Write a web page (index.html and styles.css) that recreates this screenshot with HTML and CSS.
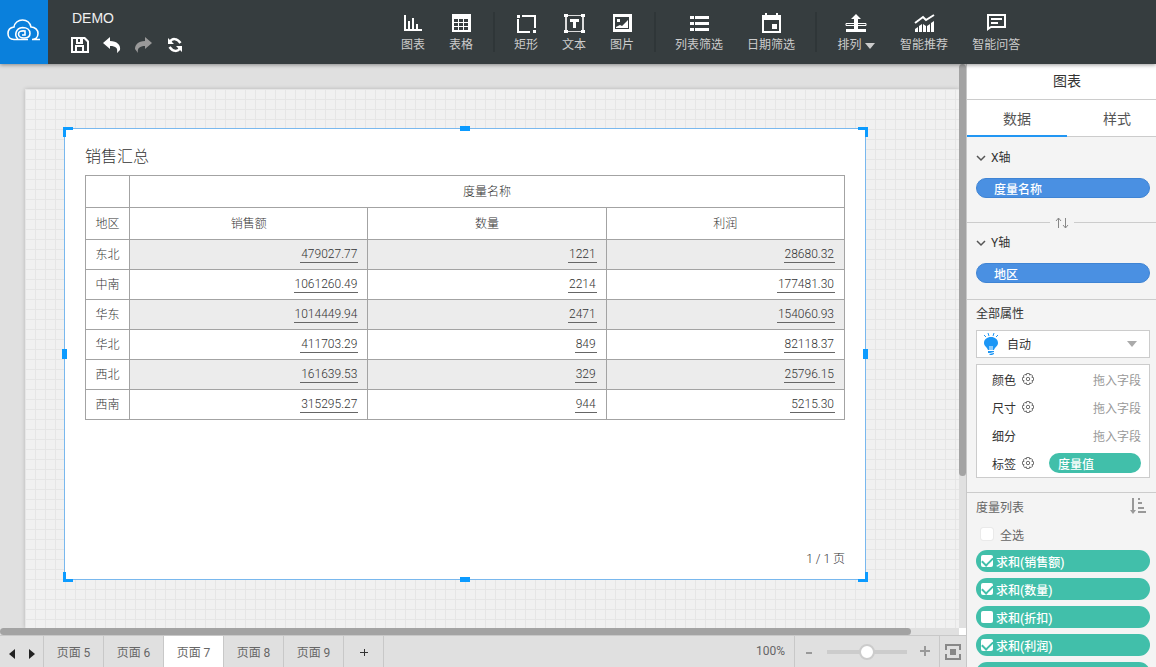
FILE: index.html
```
<!DOCTYPE html>
<html lang="zh-CN">
<head>
    <meta charset="UTF-8">
    <meta name="viewport" content="width=device-width, initial-scale=1.0">
    <title>DEMO</title>
    <link rel="stylesheet" href="styles.css">
</head>
<body>

    <!-- 顶部工具栏 -->
    <header class="header">
        <a class="logo" href="#" aria-label="首页">
            <svg width="34" height="22" viewBox="0 0 34 22" fill="none" stroke="#fff" stroke-width="1.600">
                <path d="M21 20.500H7C3 20.500 1 17.500 1 14.500C1 11 3.500 8.500 7 8C7.500 4 11 1 15.500 1C20 1 23 4 24 8C28 8 31 11 31 14.500C31 18 28.500 20.500 25 20.500H33"/>
                <path d="M11 20C7 17 8.500 9 15.500 8.500C20 8.500 23 11 23 14.500C23 18 20 19 17 19C14 19 11.500 17.500 11.500 15C11.500 12.500 14 11.500 18 12V16H15"/>
            </svg>
        </a>
        <div class="project">
            <div class="project-name">DEMO</div>
            <div class="project-actions">
                <button aria-label="保存">
                    <svg width="18" height="16" viewBox="0 0 18 16"><path fill="#fff" fill-rule="evenodd" d="M0 0H14L18 4V16H0ZM2 2V14H4V8H13V14H16V5L13 2H12V7H5V2ZM7 2V5H9V2ZM6 10V14H11V10Z"/></svg>
                </button>
                <button aria-label="撤销">
                    <svg width="18" height="16" viewBox="0 0 18 16"><path fill="#fff" d="M0 6L7 0V4C14 4 18 8 17 13L14 16C15 11 13 9 7 9V12Z"/></svg>
                </button>
                <button aria-label="重做">
                    <svg width="18" height="16" viewBox="0 0 18 16"><path fill="#999" d="M17 6L10 0V4C3 4 0 8 0 12L3 16C2 11 5 9 10 9V12Z"/></svg>
                </button>
                <button aria-label="刷新">
                    <svg width="16" height="16" viewBox="0 0 16 16"><path fill="none" stroke="#fff" stroke-width="2.500" d="M3 5C5 1 10 1 13.500 6M13 11C11 15 6 15 2.500 10"/><path fill="#fff" d="M1 1V7H7ZM15 15V9H9Z"/></svg>
                </button>
            </div>
        </div>
        <nav class="toolbar">
            <button class="tool">
                <svg width="20" height="20" viewBox="0 0 20 20" fill="#fff"><path d="M1 1H3V15H19V17H1ZM5 7H7V15H5ZM9 4H11V15H9ZM13 10H15V15H13Z"/></svg>
                <span>图表</span>
            </button>
            <button class="tool">
                <svg width="20" height="20" viewBox="0 0 20 20"><path fill="#fff" fill-rule="evenodd" d="M1 0H20V18H1ZM3 5V8H7V5ZM8 5V8H12V5ZM13 5V8H17V5ZM3 9V12H7V9ZM8 9V12H12V9ZM13 9V12H17V9ZM3 13V16H7V13ZM8 13V16H12V13ZM13 13V16H17V13Z"/></svg>
                <span>表格</span>
            </button>
            <i class="divider"></i>
            <button class="tool">
                <svg width="20" height="20" viewBox="0 0 20 20"><path fill="none" stroke="#fff" stroke-width="2" d="M6 2H19V14M14 18H2V5"/><path fill="#fff" d="M1 1H4V4H1ZM17 16H20V19H17Z"/></svg>
                <span>矩形</span>
            </button>
            <button class="tool">
                <svg width="20" height="20" viewBox="0 0 20 20"><path fill="none" stroke="#ddd" stroke-width="1" d="M2 1.500H19M2 17.500H19"/><path fill="none" stroke="#ddd" stroke-width="2" d="M2 1V17M19 1V17"/><path fill="#fff" d="M0 0H4V3H0ZM17 0H21V3H17ZM0 16H4V19H0ZM17 16H21V19H17ZM6 5H15V8H12V14H9V8H6Z"/></svg>
                <span>文本</span>
            </button>
            <button class="tool">
                <svg width="20" height="20" viewBox="0 0 20 20"><path fill="#fff" fill-rule="evenodd" d="M1 0H20V18H1ZM3 3V15H17V3ZM5 5H8V8H5ZM4 13L8 11L10 12L16 6V14H4Z"/></svg>
                <span>图片</span>
            </button>
            <i class="divider"></i>
            <button class="tool">
                <svg width="20" height="20" viewBox="0 0 20 20" fill="#fff"><path d="M1 2H5V5H1ZM6 2H20V5H6ZM1 8H5V11H1ZM6 8H20V11H6ZM1 14H5V17H1ZM6 14H20V17H6Z"/></svg>
                <span>列表筛选</span>
            </button>
            <button class="tool">
                <svg width="20" height="20" viewBox="0 0 20 20"><path fill="#fff" fill-rule="evenodd" d="M4 -1H6V1H15V-1H17V1H20V19H1V1H4ZM3 6V17H18V6ZM11 10H16V15H11Z"/></svg>
                <span>日期筛选</span>
            </button>
            <i class="divider"></i>
            <button class="tool tool-arrange">
                <svg width="22" height="20" viewBox="0 0 22 20"><path fill="none" stroke="#fff" d="M1 9.500H21V11.500H1Z"/><path fill="#fff" d="M11 0L16 5H13V15H21V18H1V15H9V5H6Z"/></svg>
                <span>排列 <i class="caret"></i></span>
            </button>
            <button class="tool">
                <svg width="20" height="20" viewBox="0 0 20 20"><path fill="none" stroke="#fff" stroke-width="2" d="M1 9L9 3L12 6L20 1"/><path fill="#fff" d="M1 15L4 13V18H1ZM5 12L8 10V18H5ZM9 10L12 12V18H9ZM13 12L16 10V18H13ZM17 9L20 7V18H17Z"/></svg>
                <span>智能推荐</span>
            </button>
            <button class="tool">
                <svg width="20" height="20" viewBox="0 0 20 20"><path fill="#fff" fill-rule="evenodd" d="M1 0H20V14H5L1 17ZM3 2V13L5 12H18V2ZM5 4H16V6H5ZM5 8H12V10H5Z"/></svg>
                <span>智能问答</span>
            </button>
        </nav>
    </header>

    <main class="main">
        <section class="editor">
            <!-- 画布 -->
            <div class="workspace">
                <div class="viewport">
                    <div class="sheet">
                        <div class="widget">
                            <h1 class="widget-title">销售汇总</h1>
                            <table class="report">
                                <colgroup><col class="col-area"><col><col><col></colgroup>
                                <thead>
                                    <tr><th></th><th colspan="3">度量名称</th></tr>
                                    <tr><th>地区</th><th>销售额</th><th>数量</th><th>利润</th></tr>
                                </thead>
                                <tbody>
                                    <tr><th>东北</th><td><span>479027.77</span></td><td><span>1221</span></td><td><span>28680.32</span></td></tr>
                                    <tr><th>中南</th><td><span>1061260.49</span></td><td><span>2214</span></td><td><span>177481.30</span></td></tr>
                                    <tr><th>华东</th><td><span>1014449.94</span></td><td><span>2471</span></td><td><span>154060.93</span></td></tr>
                                    <tr><th>华北</th><td><span>411703.29</span></td><td><span>849</span></td><td><span>82118.37</span></td></tr>
                                    <tr><th>西北</th><td><span>161639.53</span></td><td><span>329</span></td><td><span>25796.15</span></td></tr>
                                    <tr><th>西南</th><td><span>315295.27</span></td><td><span>944</span></td><td><span>5215.30</span></td></tr>
                                </tbody>
                            </table>
                            <div class="pager">1 / 1 页</div>
                            <i class="handle nw"></i><i class="handle ne"></i><i class="handle sw"></i><i class="handle se"></i>
                            <i class="handle n"></i><i class="handle s"></i><i class="handle w"></i><i class="handle e"></i>
                        </div>
                    </div>
                </div>
                <div class="scroll-y"><i></i></div>
                <div class="scroll-x"><i></i></div>
                <div class="scroll-corner"></div>
            </div>

            <!-- 页签 -->
            <footer class="statusbar">
                <div class="page-nav">
                    <button aria-label="上一页"><svg width="6" height="10" viewBox="0 0 6 10"><path fill="#222" d="M6 0V10L0 5Z"/></svg></button>
                    <button aria-label="下一页"><svg width="6" height="10" viewBox="0 0 6 10"><path fill="#222" d="M0 0V10L6 5Z"/></svg></button>
                </div>
                <button class="page-tab">页面 5</button>
                <button class="page-tab">页面 6</button>
                <button class="page-tab active">页面 7</button>
                <button class="page-tab">页面 8</button>
                <button class="page-tab">页面 9</button>
                <button class="page-add" aria-label="新增页面"><svg width="8" height="8" viewBox="0 0 8 8"><path stroke="#333" d="M0 4.500H8M4.500 1V8"/></svg></button>
                <div class="zoom-value">100%</div>
                <div class="zoom">
                    <button aria-label="缩小"><svg width="12" height="12" viewBox="0 0 12 12"><path stroke="#999" stroke-width="2" d="M3 7H9"/></svg></button>
                    <input type="range" min="0" max="200" value="100" aria-label="缩放">
                    <button aria-label="放大"><svg width="12" height="12" viewBox="0 0 12 12"><path stroke="#999" stroke-width="2" d="M1 5H11M6 0V10"/></svg></button>
                </div>
                <button class="fit" aria-label="适应屏幕">
                    <svg width="16" height="16" viewBox="0 0 16 16"><path fill="none" stroke="#888" stroke-width="2" d="M1 6V1H15V6M15 10V15H1V10"/><path fill="#888" d="M5 5H11V11H5Z"/></svg>
                </button>
            </footer>
        </section>

        <!-- 右侧属性面板 -->
        <aside class="panel">
            <h2 class="panel-title">图表</h2>
            <div class="panel-tabs">
                <button class="active">数据</button>
                <button>样式</button>
            </div>

            <div class="axis">
                <button class="axis-name"><svg width="10" height="8" viewBox="0 0 10 8"><path fill="none" stroke="#555" stroke-width="1.500" d="M1 2L5 6L9 2"/></svg>X轴</button>
                <button class="pill blue">度量名称</button>
            </div>
            <div class="swap">
                <button aria-label="交换"><svg width="14" height="12" viewBox="0 0 14 12"><path fill="none" stroke="#888" stroke-width="1" d="M3.500 11V1M1 4L3.500 1L6 4M10.500 1V11M8 8L10.500 11L13 8"/></svg></button>
            </div>
            <div class="axis axis-y">
                <button class="axis-name"><svg width="10" height="8" viewBox="0 0 10 8"><path fill="none" stroke="#555" stroke-width="1.500" d="M1 2L5 6L9 2"/></svg>Y轴</button>
                <button class="pill blue">地区</button>
            </div>

            <div class="props">
                <label class="props-title" for="chartType">全部属性</label>
                <div class="select-box">
                    <svg width="16" height="22" viewBox="0 0 16 22"><path fill="none" stroke="#1c96f5" d="M1 2L3 4M5 0L6 3M11 0L10 3M15 2L13 4"/><path fill="#1c96f5" d="M8 4C12 4 15 6.500 15 10C15 13 12 14 11 17H5C4 14 1 13 1 10C1 6.500 4 4 8 4ZM5 18H11V19L7 20H5ZM6 21L11 20V21L9 22H7Z"/><path fill="none" stroke="#fff" d="M7 17V13M9 17V13"/></svg>
                    <select id="chartType"><option>自动</option></select>
                    <i class="caret"></i>
                </div>
                <div class="marks">
                    <div class="mark"><span>颜色</span><button class="gear" aria-label="颜色设置"><svg width="12" height="12" viewBox="0 0 14 14"><use href="#gear"/></svg></button><em>拖入字段</em></div>
                    <div class="mark"><span>尺寸</span><button class="gear" aria-label="尺寸设置"><svg width="12" height="12" viewBox="0 0 14 14"><use href="#gear"/></svg></button><em>拖入字段</em></div>
                    <div class="mark"><span>细分</span><em>拖入字段</em></div>
                    <div class="mark"><span>标签</span><button class="gear" aria-label="标签设置"><svg width="12" height="12" viewBox="0 0 14 14"><use href="#gear"/></svg></button><button class="pill green">度量值</button></div>
                </div>
            </div>

            <div class="measures">
                <div class="measures-head">
                    <span>度量列表</span>
                    <button aria-label="排序"><svg width="16" height="16" viewBox="0 0 16 16"><path fill="#999" d="M2 0H4V12H6L3 16L0 12H2ZM8 0H10V2H8ZM8 4H12V6H8ZM8 9H14V11H8ZM8 13H16V15H8Z"/></svg></button>
                </div>
                <label class="check-all"><input type="checkbox">全选</label>
                <label class="pill green measure"><input type="checkbox" checked>求和(销售额)</label>
                <label class="pill green measure"><input type="checkbox" checked>求和(数量)</label>
                <label class="pill green measure"><input type="checkbox">求和(折扣)</label>
                <label class="pill green measure"><input type="checkbox" checked>求和(利润)</label>
                <div class="pill green measure"></div>
            </div>
        </aside>
    </main>

    <svg class="defs" width="0" height="0">
        <symbol id="gear" viewBox="0 0 14 14">
            <path fill="none" stroke="#555" d="M5.500 0.500H8.500L9 2.500L10.500 1.500L12.500 3.500L11.500 5L13.500 5.500V8.500L11.500 9L12.500 10.500L10.500 12.500L9 11.500L8.500 13.500H5.500L5 11.500L3.500 12.500L1.500 10.500L2.500 9L0.500 8.500V5.500L2.500 5L1.500 3.500L3.500 1.500L5 2.500Z"/>
            <circle cx="7" cy="7" r="2" fill="none" stroke="#555"/>
        </symbol>
    </svg>

</body>
</html>
```
FILE: styles.css
```
* {
    box-sizing: border-box;
}

body {
    margin: 0;
    height: 100vh;
    display: flex;
    flex-direction: column;
    overflow: hidden;
    font-family: Roboto, "Noto Sans CJK SC", sans-serif;
    font-size: 12px;
    color: #333;
}

button {
    padding: 0;
    border: none;
    background: none;
    font: inherit;
    color: inherit;
    cursor: pointer;
}

svg {
    display: block;
    flex: none;
    overflow: visible;
}

.defs {
    position: absolute;
}

/* 顶部工具栏 */
.header {
    display: flex;
    flex: 0 0 64px;
    background-color: #363d3f;
    box-shadow: 0 1px 4px rgba(0, 0, 0, 0.4);
    position: relative;
    z-index: 2;
}

.logo {
    width: 48px;
    display: flex;
    align-items: center;
    justify-content: center;
    padding-bottom: 4px;
    background-color: #0a80dc;
}

.project {
    flex: 0 0 341px;
    padding: 10px 0 0 24px;
}

.project-name {
    font-family: "Liberation Sans", sans-serif;
    font-size: 14px;
    line-height: 16px;
    color: #f0f0f0;
}

.project-actions {
    display: flex;
    gap: 14px;
    margin: 11px 0 0 -1px;
}

.toolbar {
    display: flex;
}

.tool {
    display: flex;
    flex-direction: column;
    align-items: center;
    gap: 2px;
    padding: 14px 12px 0;
    line-height: 18px;
    color: #ccc;
}

.tool-arrange {
    width: 64px;
    padding: 14px 0 0;
}

.tool span {
    white-space: nowrap;
}

.divider {
    width: 2px;
    height: 40px;
    margin: 12px 7px 0 8px;
    background-color: #2f3638;
}

.caret {
    display: inline-block;
    border: 5px solid transparent;
    border-top: 6px solid #ccc;
    border-bottom: none;
}

.main {
    flex: 1;
    min-height: 0;
    display: flex;
}

.editor {
    flex: 1;
    min-width: 0;
    display: flex;
    flex-direction: column;
}

/* 画布 */
.workspace {
    flex: 1;
    min-height: 0;
    display: grid;
    grid-template-columns: 1fr 7px;
    grid-template-rows: 1fr 7px;
    background-color: #e0e0e0;
}

.viewport {
    overflow: hidden;
    padding: 25px 0 0 25px;
}

.sheet {
    position: relative;
    height: 100%;
    background-color: #f1f1f1;
    background-image: linear-gradient(#e6e6e6 1px, transparent 1px), linear-gradient(90deg, #e6e6e6 1px, transparent 1px);
    background-size: 10px 10px;
    box-shadow: 0 0 4px rgba(0, 0, 0, 0.2);
}

.scroll-y i,
.scroll-x i {
    display: block;
    background-color: #a3a3a3;
    border-radius: 4px;
}

.scroll-y i {
    height: 73%;
}

.scroll-x i {
    width: 95%;
    height: 7px;
}

.scroll-corner {
    background-color: #fff;
}

.widget {
    position: absolute;
    left: 39px;
    top: 39px;
    width: 802px;
    height: 452px;
    padding: 18px 20px 11px;
    display: flex;
    flex-direction: column;
    background-color: #fff;
    border: 1px solid #79b8ee;
    font-weight: 300;
}

.widget-title {
    margin: 0 0 8px;
    font-size: 16px;
    font-weight: 300;
    line-height: 20px;
}

.report {
    width: 100%;
    table-layout: fixed;
    border-collapse: collapse;
}

.col-area {
    width: 44px;
}

.report th,
.report td {
    height: 30px;
    padding: 0 9px;
    border: 1px solid #a3a3a3;
    font-weight: 300;
    line-height: 16px;
    white-space: nowrap;
}

.report th {
    padding: 0;
}

.report thead th {
    height: 32px;
}

.report td {
    text-align: right;
}

.report td span {
    display: inline-block;
    padding: 0 1px;
    border-bottom: 1px solid #666;
}

.report tbody tr:nth-child(odd) td {
    background-color: #ececec;
}

.pager {
    margin-top: auto;
    text-align: right;
    line-height: 18px;
}

.handle {
    position: absolute;
    width: 10px;
    height: 10px;
    border: 0 solid #0c9bff;
}

.nw { left: -2px; top: -2px; border-width: 3px 0 0 3px; }
.ne { right: -3px; top: -2px; border-width: 3px 3px 0 0; }
.sw { left: -2px; bottom: -3px; border-width: 0 0 3px 3px; }
.se { right: -3px; bottom: -3px; border-width: 0 3px 3px 0; }
.n { left: calc(50% - 5px); top: -3px; border-top-width: 5px; }
.s { left: calc(50% - 5px); bottom: -3px; border-bottom-width: 5px; }
.w { left: -3px; top: calc(50% - 5px); border-left-width: 5px; }
.e { right: -3px; top: calc(50% - 5px); border-right-width: 5px; }

/* 底部页签 */
.statusbar {
    flex: 0 0 32px;
    display: flex;
    background-color: #e0e0e0;
    border-top: 1px solid #c8c8c8;
    color: #666;
}

.page-nav {
    width: 44px;
    display: flex;
    align-items: center;
    justify-content: center;
    gap: 14px;
    padding-top: 4px;
    border-right: 1px solid #c8c8c8;
}

.page-tab {
    width: 60px;
    border-right: 1px solid #c8c8c8;
}

.page-tab.active {
    background-color: #fff;
}

.page-add {
    width: 40px;
    display: flex;
    align-items: center;
    justify-content: center;
    border-right: 1px solid #c8c8c8;
}

.zoom-value {
    margin-left: auto;
    padding-right: 9px;
    line-height: 30px;
}

.zoom {
    display: flex;
    align-items: center;
    gap: 12px;
    padding: 0 8px;
    border-left: 1px solid #c8c8c8;
}

.zoom input {
    appearance: none;
    width: 80px;
    height: 16px;
    margin: 0;
    background: none;
}

.zoom input::-webkit-slider-runnable-track {
    height: 4px;
    background-color: #ccc;
}

.zoom input::-webkit-slider-thumb {
    appearance: none;
    width: 16px;
    height: 16px;
    margin-top: -6px;
    border: 2px solid #ccc;
    border-radius: 50%;
    background-color: #fff;
}

.fit {
    width: 27px;
    display: flex;
    align-items: center;
    justify-content: center;
    border-left: 1px solid #c8c8c8;
}

/* 右侧属性面板 */
.panel {
    width: 190px;
    overflow: hidden;
    background-color: #f4f4f4;
    border-left: 1px solid #c8c8c8;
}

.panel-title {
    margin: 0;
    padding-left: 11px;
    text-align: center;
    font-size: 14px;
    font-weight: normal;
    line-height: 35px;
    background-color: #fff;
    border-bottom: 1px solid #ccc;
}

.panel-tabs {
    display: flex;
    height: 37px;
    background-color: #fff;
    font-size: 14px;
    color: #555;
}

.panel-tabs button {
    flex: 0 0 100px;
    border-bottom: 1px solid #ccc;
}

.panel-tabs .active {
    border-bottom: 2px solid #2196f3;
}

.axis {
    padding: 11px 6px 0 9px;
}

.axis-y {
    padding-top: 4px;
    padding-bottom: 16px;
}

.axis-name {
    display: flex;
    align-items: center;
    gap: 5px;
    line-height: 20px;
}

.pill {
    display: flex;
    align-items: center;
    width: 100%;
    height: 20px;
    border-radius: 11px;
    color: #fff;
    font-weight: 500;
}

.blue {
    margin-top: 10px;
    padding-left: 17px;
    border: 1px solid #3f84d4;
    background-color: #4a90e2;
}

.green {
    background-color: #41bfaa;
}

.swap {
    display: flex;
    align-items: center;
    height: 13px;
    gap: 5px;
    margin-top: 18px;
}

.swap::before,
.swap::after {
    content: "";
    flex: 1;
    height: 1px;
    background-color: #ccc;
}

.props {
    padding: 4px 6px 14px 9px;
    border-top: 1px solid #ccc;
    border-bottom: 1px solid #ccc;
}

.props-title {
    display: block;
    line-height: 20px;
}

.select-box {
    display: flex;
    align-items: center;
    height: 28px;
    margin: 6px 0;
    padding: 0 12px 0 6px;
    background-color: #fff;
    border: 1px solid #ccc;
}

.select-box select {
    appearance: none;
    flex: 1;
    padding: 2px 0 0 8px;
    border: none;
    background: none;
    font: inherit;
    color: inherit;
}

.select-box .caret {
    border-top-color: #aaa;
}

.marks {
    background-color: #fff;
    border: 1px solid #ccc;
}

.mark {
    display: flex;
    align-items: center;
    height: 28px;
    padding: 0 8px 0 15px;
}

.gear {
    margin-left: 6px;
}

.mark em {
    margin-left: auto;
    font-style: normal;
    color: #999;
}

.mark .pill {
    width: 92px;
    margin-left: auto;
    padding-left: 9px;
}

.measures {
    padding: 5px 6px 0 9px;
}

.measures-head {
    display: flex;
    justify-content: space-between;
    align-items: flex-start;
    padding-right: 4px;
    line-height: 20px;
    color: #666;
}

.check-all {
    display: flex;
    align-items: center;
    height: 26px;
    padding: 6px 0 0 5px;
    gap: 7px;
    color: #666;
}

.measures input {
    appearance: none;
    display: flex;
    justify-content: center;
    width: 12px;
    height: 12px;
    margin: 0;
    border-radius: 2px;
    background-color: #fff;
}

.check-all input {
    outline: 1px solid #eaeaea;
}

.measures input:checked::after {
    content: "";
    width: 5px;
    height: 9px;
    border: solid #41bfaa;
    border-width: 0 2px 2px 0;
    transform: rotate(45deg);
}

.measure {
    height: 22px;
    margin-bottom: 6px;
    padding-left: 5px;
    gap: 3px;
}

.check-all + .measure {
    margin-top: 6px;
}
```
